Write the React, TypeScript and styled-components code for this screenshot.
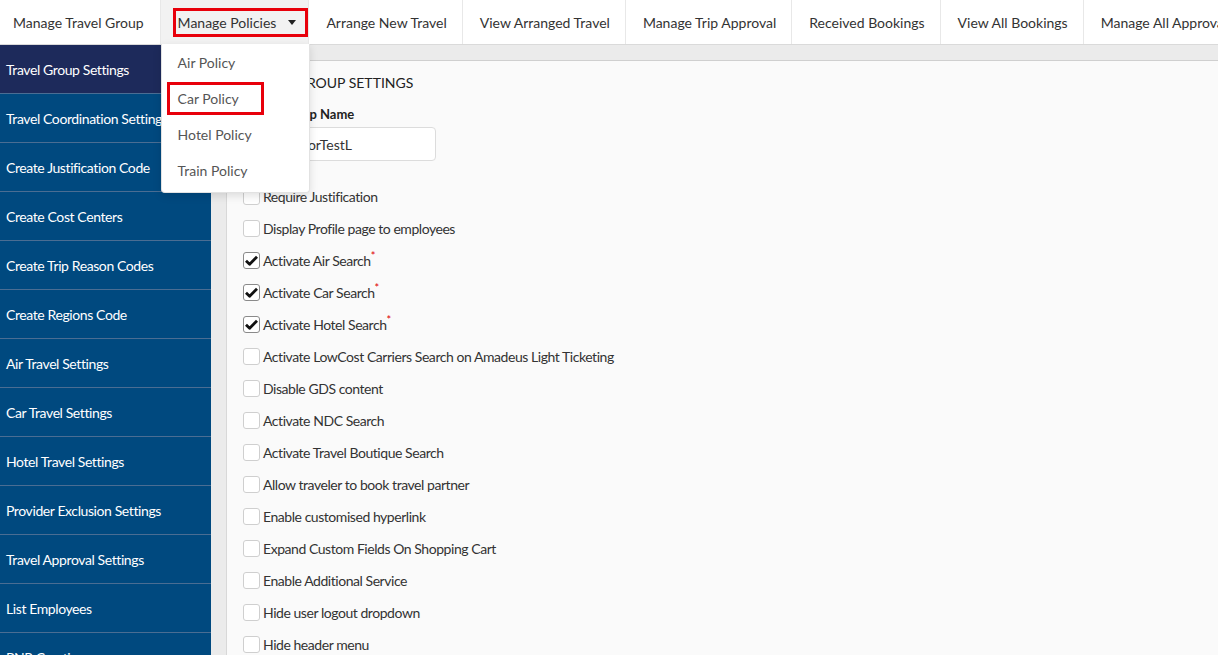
import * as React from 'react';
import styled, { createGlobalStyle } from 'styled-components';

const GlobalStyle = createGlobalStyle`
  html, body {
    margin: 0;
    padding: 0;
    background: #ffffff;
    font-family: Lato, "Open Sans", sans-serif;
  }
  * { box-sizing: border-box; }
`;

const topLinks = [
  'Manage Travel Group',
  'Manage Policies',
  'Arrange New Travel',
  'View Arranged Travel',
  'Manage Trip Approval',
  'Received Bookings',
  'View All Bookings',
  'Manage All Approvals',
];

const policies = ['Air Policy', 'Car Policy', 'Hotel Policy', 'Train Policy'];

const sideLinks = [
  'Travel Group Settings',
  'Travel Coordination Settings',
  'Create Justification Code',
  'Create Cost Centers',
  'Create Trip Reason Codes',
  'Create Regions Code',
  'Air Travel Settings',
  'Car Travel Settings',
  'Hotel Travel Settings',
  'Provider Exclusion Settings',
  'Travel Approval Settings',
  'List Employees',
  'PNR Creation',
];

const options = [
  { label: 'Require Justification', checked: false, required: false },
  { label: 'Display Profile page to employees', checked: false, required: false },
  { label: 'Activate Air Search', checked: true, required: true },
  { label: 'Activate Car Search', checked: true, required: true },
  { label: 'Activate Hotel Search', checked: true, required: true },
  { label: 'Activate LowCost Carriers Search on Amadeus Light Ticketing', checked: false, required: false },
  { label: 'Disable GDS content', checked: false, required: false },
  { label: 'Activate NDC Search', checked: false, required: false },
  { label: 'Activate Travel Boutique Search', checked: false, required: false },
  { label: 'Allow traveler to book travel partner', checked: false, required: false },
  { label: 'Enable customised hyperlink', checked: false, required: false },
  { label: 'Expand Custom Fields On Shopping Cart', checked: false, required: false },
  { label: 'Enable Additional Service', checked: false, required: false },
  { label: 'Hide user logout dropdown', checked: false, required: false },
  { label: 'Hide header menu', checked: false, required: false },
];

const Page = styled.div`
  width: 1218px;
  height: 655px;
  overflow: hidden;
  display: flex;
  flex-direction: column;
`;

const TopNav = styled.nav`
  height: 45px;
  flex-shrink: 0;
  display: flex;
  background: #ffffff;
  border-bottom: 1px solid #dadada;
  position: relative;
  z-index: 5;
  white-space: nowrap;
`;

const NavItem = styled.div<{ $first?: boolean; $open?: boolean }>`
  position: relative;
  display: flex;
  align-items: center;
  padding-left: ${(p) => (p.$first ? '13px' : p.$open ? '12px' : '17px')};
  padding-right: ${(p) => (p.$first ? '16px' : p.$open ? '0' : '15px')};
  border-left: ${(p) => (p.$first ? 'none' : '1px solid #e8e8e8')};
  background: ${(p) => (p.$open ? '#f2f2f2' : '#ffffff')};
  font-size: 14px;
  color: #333333;
  cursor: pointer;
`;

const Highlight = styled.span`
  display: flex;
  align-items: center;
  gap: 12px;
  height: 29px;
  padding: 0 9px 0 2px;
  border: 3px solid #e8000b;
`;

const Caret = styled.span`
  width: 0;
  height: 0;
  border-left: 4px solid transparent;
  border-right: 4px solid transparent;
  border-top: 5px solid #222222;
`;

const Dropdown = styled.ul`
  position: absolute;
  top: 44px;
  left: 0;
  width: 149px;
  margin: 0;
  padding: 0 0 4px;
  list-style: none;
  background: #ffffff;
  border: 1px solid #e2e2e2;
  border-top: none;
  border-radius: 0 0 4px 4px;
  box-shadow: 0 3px 8px rgba(0, 0, 0, 0.12);
`;

const DropdownItem = styled.li`
  height: 36px;
  display: flex;
  align-items: center;
  padding-left: 16px;
  font-size: 14px;
  color: #555555;
`;

const Marked = styled.span`
  display: flex;
  align-items: center;
  width: 97px;
  height: 33px;
  margin-left: -11px;
  padding-left: 8px;
  border: 3px solid #e8000b;
`;

const Body = styled.div`
  flex: 1;
  display: flex;
  min-height: 0;
`;

const Sidebar = styled.aside`
  width: 211px;
  flex-shrink: 0;
  background: #00497f;
`;

const SideItem = styled.div<{ $active?: boolean }>`
  height: 49px;
  display: flex;
  align-items: center;
  padding-left: 6px;
  background: ${(p) => (p.$active ? '#1d2a5b' : '#00497f')};
  border-bottom: 1px solid #4a6d93;
  color: #ffffff;
  font-size: 14px;
  letter-spacing: -0.4px;
  white-space: nowrap;
  overflow: hidden;
`;

const Main = styled.main`
  flex: 1;
  background: #ebebeb;
  padding: 15px 0 0 15px;
  display: flex;
`;

const Panel = styled.section`
  flex: 1;
  background: #fafafa;
  border-top: 1px solid #cfcfcf;
  border-left: 1px solid #d8d8d8;
  padding: 13px 16px 0 16px;
`;

const Title = styled.h2`
  margin: 0 0 15px;
  font-size: 14px;
  font-weight: 400;
  line-height: 17px;
  color: #222222;
  text-transform: uppercase;
`;

const Label = styled.label`
  display: block;
  font-size: 13px;
  font-weight: 700;
  line-height: 17px;
  color: #222222;
  margin-bottom: 4px;
`;

const TextInput = styled.input`
  display: block;
  width: 193px;
  height: 34px;
  padding: 0 11px;
  font-family: Lato, sans-serif;
  font-size: 14px;
  color: #333333;
  background: #ffffff;
  border: 1px solid #dcdcdc;
  border-radius: 4px;
  outline: none;
  margin-bottom: 19px;
`;

const OptionList = styled.div`
  display: flex;
  flex-direction: column;
`;

const OptionRow = styled.label`
  height: 32px;
  display: flex;
  align-items: center;
  gap: 3px;
  font-size: 14px;
  color: #333333;
  letter-spacing: -0.45px;
  white-space: nowrap;
`;

const Box = styled.span<{ $checked: boolean }>`
  width: 17px;
  height: 17px;
  display: flex;
  align-items: center;
  justify-content: center;
  background: #ffffff;
  border: 1px solid ${(p) => (p.$checked ? '#8a8a8a' : '#cfcfcf')};
  border-radius: 3px;
  flex-shrink: 0;
`;

const Required = styled.sup`
  color: #e00000;
  font-size: 11px;
  line-height: 0;
  position: relative;
  top: 0;
`;

const Tick = () => (
  <svg width="13" height="11" viewBox="0 0 13 11">
    <path d="M1 5.8 L4.6 9.3 L12 1.8" fill="none" stroke="#111" strokeWidth="2.8" strokeLinejoin="round" />
  </svg>
);

const App: React.FunctionComponent = () => {
  return (
    <Page>
      <GlobalStyle />
      <TopNav>
        {topLinks.map((link, i) =>
          link === 'Manage Policies' ? (
            <NavItem key={link} $open>
              <Highlight>
                {link}
                <Caret />
              </Highlight>
              <Dropdown>
                {policies.map((p) => (
                  <DropdownItem key={p}>{p === 'Car Policy' ? <Marked>{p}</Marked> : p}</DropdownItem>
                ))}
              </Dropdown>
            </NavItem>
          ) : (
            <NavItem key={link} $first={i === 0}>
              {link}
            </NavItem>
          )
        )}
      </TopNav>
      <Body>
        <Sidebar>
          {sideLinks.map((s, i) => (
            <SideItem key={s} $active={i === 0}>
              {s}
            </SideItem>
          ))}
        </Sidebar>
        <Main>
          <Panel>
            <Title>Travel Group Settings</Title>
            <Label>Travel Group Name</Label>
            <TextInput defaultValue="AgencyForTestL" />
            <OptionList>
              {options.map((o) => (
                <OptionRow key={o.label}>
                  <Box $checked={o.checked}>{o.checked && <Tick />}</Box>
                  <span>
                    {o.label}
                    {o.required && <Required>*</Required>}
                  </span>
                </OptionRow>
              ))}
            </OptionList>
          </Panel>
        </Main>
      </Body>
    </Page>
  );
};

export default App;
